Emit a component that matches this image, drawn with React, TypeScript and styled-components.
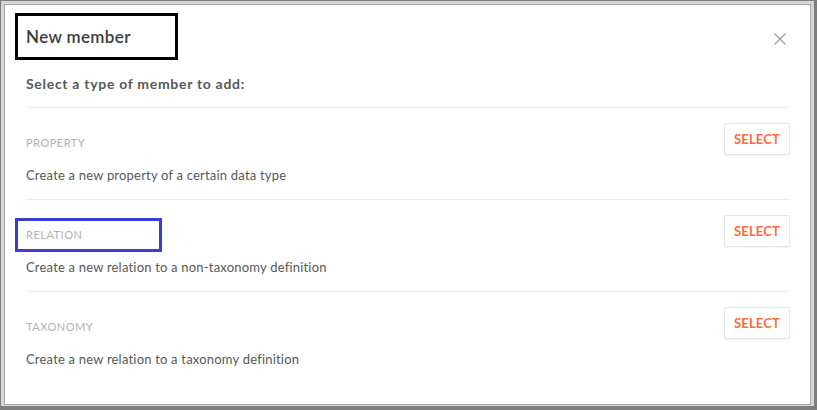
import React from 'react';
import styled, { createGlobalStyle } from 'styled-components';

const GlobalStyle = createGlobalStyle`
    html, body {
        margin: 0;
        padding: 0;
        background: #ffffff;
    }
    body {
        font-family: Lato, "Open Sans", "Noto Sans", sans-serif;
    }
`;

const Frame = styled.div`
    box-sizing: border-box;
    width: 817px;
    height: 410px;
    background: #d6d6d6;
    border-style: solid;
    border-color: #7e7e7e;
    border-width: 1px 3px 4px 1px;
    padding: 3px 3px 1px 3px;
    display: flex;
`;

const Panel = styled.div`
    flex: 1;
    background: #ffffff;
    border: 1px solid #a8a8a8;
    padding: 0 20px 0 21px;
    display: flex;
    flex-direction: column;
`;

const Header = styled.div`
    display: flex;
    justify-content: space-between;
    align-items: flex-start;
    margin-top: 8px;
`;

const Title = styled.h2`
    box-sizing: border-box;
    width: 163px;
    height: 47px;
    margin: 0 0 0 -11px;
    padding: 0 8px;
    border: 3px solid #000000;
    display: flex;
    align-items: center;
    font-size: 17px;
    font-weight: 600;
    letter-spacing: 0.35px;
    color: #3c3c3c;
`;

const CloseButton = styled.button`
    background: none;
    border: none;
    padding: 0;
    margin: 19px 3px 0 0;
    width: 14px;
    height: 14px;
    cursor: pointer;
    color: #a0a0a0;
    display: flex;
`;

const Subtitle = styled.p`
    margin: 14px 0 13px;
    line-height: 20px;
    font-size: 14px;
    font-weight: 700;
    letter-spacing: 0.7px;
    color: #595959;
`;

const Row = styled.div`
    box-sizing: border-box;
    height: 92px;
    border-top: 1px solid #ececec;
    padding-top: 15px;
    display: flex;
    justify-content: space-between;
    align-items: flex-start;
`;

const Info = styled.div`
    display: flex;
    flex-direction: column;
    align-items: flex-start;
    margin-top: 3px;
`;

const TypeLabel = styled.span<{ $highlight?: boolean }>`
    box-sizing: border-box;
    display: inline-block;
    width: ${(p) => (p.$highlight ? '147px' : 'auto')};
    margin-left: -11px;
    padding: 7px 8px;
    border: 3px solid ${(p) => (p.$highlight ? '#3a3fd2' : 'transparent')};
    line-height: 14px;
    font-size: 11px;
    letter-spacing: 0.5px;
    text-transform: uppercase;
    color: #b2b2b2;
`;

const Description = styled.span`
    margin-top: 6px;
    line-height: 18px;
    font-size: 13px;
    letter-spacing: 0.2px;
    color: #585858;
`;

const SelectButton = styled.button`
    box-sizing: border-box;
    width: 66px;
    height: 32px;
    background: #ffffff;
    border: 1px solid #e6e6e6;
    border-radius: 2px;
    box-shadow: 0 1px 1px rgba(0, 0, 0, 0.04);
    font-family: inherit;
    font-size: 13px;
    font-weight: 700;
    letter-spacing: 0.2px;
    color: #ff6a3c;
    cursor: pointer;
`;

const memberTypes = [
    { key: 'property', label: 'Property', text: 'Create a new property of a certain data type' },
    { key: 'relation', label: 'Relation', text: 'Create a new relation to a non-taxonomy definition', highlight: true },
    { key: 'taxonomy', label: 'Taxonomy', text: 'Create a new relation to a taxonomy definition' },
];

export default function App() {
    return (
        <>
            <GlobalStyle />
            <Frame>
                <Panel>
                    <Header>
                        <Title>New member</Title>
                        <CloseButton aria-label="Close">
                            <svg width="14" height="14" viewBox="0 0 14 14">
                                <path d="M1.5 1.5 L12.5 12.5 M12.5 1.5 L1.5 12.5" stroke="currentColor" strokeWidth="1.4" fill="none" />
                            </svg>
                        </CloseButton>
                    </Header>
                    <Subtitle>Select a type of member to add:</Subtitle>
                    {memberTypes.map((item) => (
                        <Row key={item.key}>
                            <Info>
                                <TypeLabel $highlight={item.highlight}>{item.label}</TypeLabel>
                                <Description>{item.text}</Description>
                            </Info>
                            <SelectButton>SELECT</SelectButton>
                        </Row>
                    ))}
                </Panel>
            </Frame>
        </>
    );
}
